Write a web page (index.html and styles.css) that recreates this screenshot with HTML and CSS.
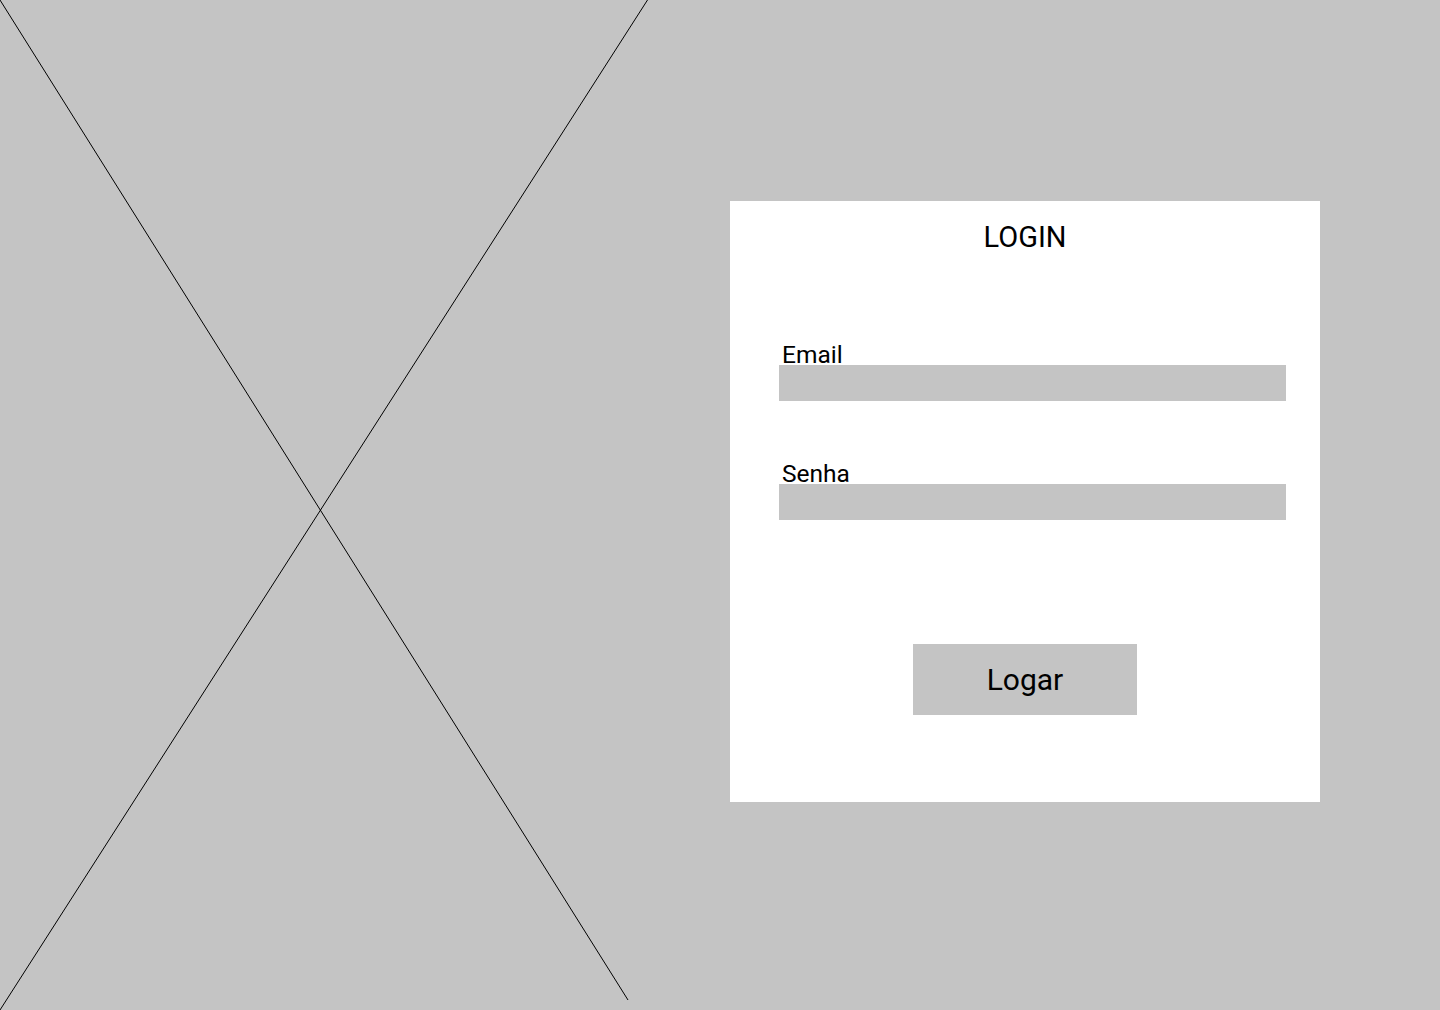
FILE: index.html
```html
<!DOCTYPE html>
<html lang="pt-BR">
<head>
<meta charset="utf-8">
<title>Login</title>
<link rel="stylesheet" href="styles.css">
</head>
<body>
<main class="page">
  <section class="placeholder" aria-hidden="true">
    <svg class="placeholder-x" width="648" height="1010" viewBox="0 0 648 1010">
      <line x1="0" y1="0" x2="628" y2="1000" stroke="#000" stroke-width="1"/>
      <line x1="647.5" y1="0" x2="0" y2="1010" stroke="#000" stroke-width="1"/>
    </svg>
  </section>
  <section class="side">
    <form class="card">
      <h1 class="title">LOGIN</h1>
      <label class="label label-email" for="email">Email</label>
      <input class="field" id="email" type="email">
      <label class="label label-senha" for="senha">Senha</label>
      <input class="field" id="senha" type="password">
      <button class="btn" type="button">Logar</button>
    </form>
  </section>
</main>
</body>
</html>
```

FILE: styles.css
```css
* { box-sizing: border-box; }
html, body {
  margin: 0;
  padding: 0;
  width: 1440px;
  height: 1010px;
  overflow: hidden;
  background: #c4c4c4;
  font-family: Roboto, "Liberation Sans", sans-serif;
  color: #000;
}
.page {
  display: flex;
  width: 1440px;
  height: 1010px;
}
.placeholder {
  width: 648px;
  height: 1010px;
  flex: none;
}
.placeholder-x { display: block; }
.side {
  flex: 1;
  padding: 201px 0 0 82px;
}
.card {
  width: 590px;
  height: 601px;
  background: #fff;
  padding-top: 20px;
  display: flex;
  flex-direction: column;
}
.title {
  margin: 0;
  font-size: 29px;
  font-weight: 400;
  line-height: 33px;
  text-align: center;
}
.label {
  display: block;
  margin-left: 52px;
  font-size: 24.5px;
  line-height: 25px;
  height: 23px;
}
.label-email { margin-top: 88px; }
.label-senha { margin-top: 60px; }
.field {
  display: block;
  margin: 0 0 0 49px;
  width: 507px;
  height: 36px;
  border: 0;
  padding: 0;
  background: #c4c4c4;
  outline: none;
}
.btn {
  display: block;
  margin: 124px auto 0;
  width: 224px;
  height: 71px;
  border: 0;
  padding: 0;
  background: #c4c4c4;
  font-family: Roboto, "Liberation Sans", sans-serif;
  font-size: 30px;
  color: #000;
  cursor: pointer;
}
```
